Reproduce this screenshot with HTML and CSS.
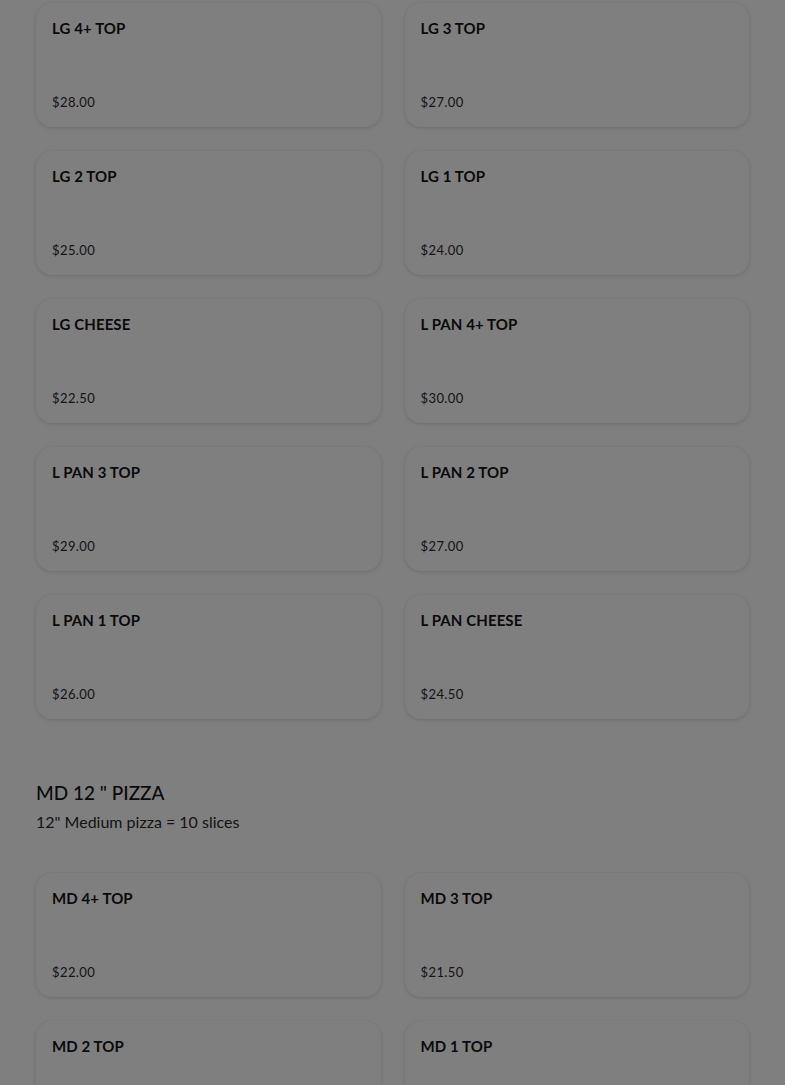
FILE: index.html
```html
<!DOCTYPE html>
<html>
<head>
<meta charset="utf-8">
<link rel="stylesheet" href="styles.css">
</head>
<body>
<main class="menu">
  <section class="group group-first">
    <div class="grid">
      <div class="card"><div class="name">LG 4+ TOP</div><div class="price">$28.00</div></div>
      <div class="card"><div class="name">LG 3 TOP</div><div class="price">$27.00</div></div>
      <div class="card"><div class="name">LG 2 TOP</div><div class="price">$25.00</div></div>
      <div class="card"><div class="name">LG 1 TOP</div><div class="price">$24.00</div></div>
      <div class="card"><div class="name">LG CHEESE</div><div class="price">$22.50</div></div>
      <div class="card"><div class="name">L PAN 4+ TOP</div><div class="price">$30.00</div></div>
      <div class="card"><div class="name">L PAN 3 TOP</div><div class="price">$29.00</div></div>
      <div class="card"><div class="name">L PAN 2 TOP</div><div class="price">$27.00</div></div>
      <div class="card"><div class="name">L PAN 1 TOP</div><div class="price">$26.00</div></div>
      <div class="card"><div class="name">L PAN CHEESE</div><div class="price">$24.50</div></div>
    </div>
  </section>
  <section class="group">
    <h2 class="group-title">MD 12 " PIZZA</h2>
    <p class="group-desc">12" Medium pizza = 10 slices</p>
    <div class="grid">
      <div class="card"><div class="name">MD 4+ TOP</div><div class="price">$22.00</div></div>
      <div class="card"><div class="name">MD 3 TOP</div><div class="price">$21.50</div></div>
      <div class="card"><div class="name">MD 2 TOP</div><div class="price">$21.00</div></div>
      <div class="card"><div class="name">MD 1 TOP</div><div class="price">$20.00</div></div>
    </div>
  </section>
</main>
<div class="overlay"></div>
</body>
</html>
```
FILE: styles.css
```css
html, body {
  margin: 0;
  padding: 0;
  background: #ffffff;
  font-family: Lato, "Noto Sans", sans-serif;
  color: #141414;
  overflow: hidden;
  height: 1085px;
}

.menu {
  padding: 3px 36px 0 36px;
}

.grid {
  display: grid;
  grid-template-columns: 1fr 1fr;
  column-gap: 24px;
  row-gap: 24px;
}

.card {
  height: 124px;
  box-sizing: border-box;
  padding: 16px;
  border-radius: 16px;
  background: #ffffff;
  box-shadow: 0 1px 4px rgba(0, 0, 0, 0.14), 0 0 1px rgba(0, 0, 0, 0.08);
  display: flex;
  flex-direction: column;
  justify-content: space-between;
}

.name {
  font-size: 15px;
  line-height: 19px;
  font-weight: 700;
  letter-spacing: 0.1px;
  color: #141414;
}

.price {
  font-size: 13px;
  line-height: 18px;
  color: #2a2a2a;
  letter-spacing: 0.4px;
}

.group + .group {
  margin-top: 62px;
}

.group-title {
  margin: 0;
  font-size: 19px;
  line-height: 24px;
  font-weight: 500;
  color: #141414;
}

.group-desc {
  margin: 6px 0 40px 0;
  font-size: 16px;
  line-height: 22px;
  color: #2a2a2a;
}

.overlay {
  position: fixed;
  inset: 0;
  background: rgba(0, 0, 0, 0.5);
}
```
